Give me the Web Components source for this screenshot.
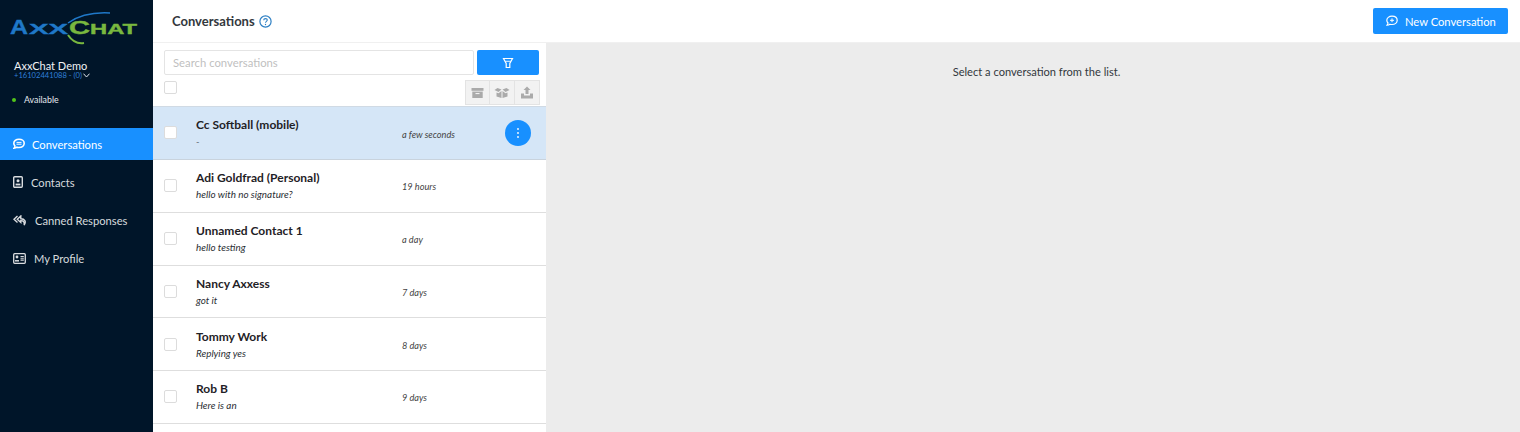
<!DOCTYPE html>
<html>
<head>
<meta charset="utf-8">
<title>AxxChat</title>
<style>
  html, body { margin: 0; height: 100%; overflow: hidden; }
  body { font-family: Lato, "Noto Sans", sans-serif; }
</style>
</head>
<body>
<axx-app>
  <axx-sidebar slot="sidebar"></axx-sidebar>
  <axx-topbar slot="topbar"></axx-topbar>
  <axx-list slot="list">
    <axx-row name="Cc Softball (mobile)" preview="-" time="a few seconds" active></axx-row>
    <axx-row name="Adi Goldfrad (Personal)" preview="hello with no signature?" time="19 hours"></axx-row>
    <axx-row name="Unnamed Contact 1" preview="hello testing" time="a day"></axx-row>
    <axx-row name="Nancy Axxess" preview="got it" time="7 days"></axx-row>
    <axx-row name="Tommy Work" preview="Replying yes" time="8 days"></axx-row>
    <axx-row name="Rob B" preview="Here is an" time="9 days"></axx-row>
  </axx-list>
  <axx-empty slot="detail">Select a conversation from the list.</axx-empty>
</axx-app>

<script>
class AxxApp extends HTMLElement {
  constructor() {
    super()
    this.attachShadow({mode: 'open'})
    this.shadowRoot.innerHTML = /*html*/ `
      <style>
        :host {
          display: grid;
          grid-template-columns: 153px 393px 1fr;
          grid-template-rows: 43px 1fr;
          height: 432px;
          overflow: hidden;
          background: #fff;
        }
        .side { grid-row: 1 / 3; }
        .top { grid-column: 2 / 4; }
      </style>
      <div class="side"><slot name="sidebar"></slot></div>
      <div class="top"><slot name="topbar"></slot></div>
      <slot name="list"></slot>
      <slot name="detail"></slot>
    `
  }
}

class AxxSidebar extends HTMLElement {
  constructor() {
    super()
    this.attachShadow({mode: 'open'})
    this.shadowRoot.innerHTML = /*html*/ `
      <style>
        :host { display: block; height: 432px; background: #001529; color: #fff; overflow: hidden; }
        .logo { display: block; margin: 10px 0 0 8px; }
        .logo text { font-family: "Liberation Sans", sans-serif; font-weight: 700; }
        .blue { fill: #1f78c8; stroke: #1f78c8; stroke-width: .4; }
        .green { fill: #79b83f; stroke: #79b83f; stroke-width: .4; }
        .user { padding: 11px 0 0 14px; height: 20px; }
        .name { font-size: 11px; line-height: 13px; color: #f0f3f6; }
        .phone { display: flex; align-items: center; font-size: 7.6px; line-height: 7px; color: #2f7fd8; }
        .phone svg { margin-left: 1px; }
        .status { display: flex; align-items: center; gap: 8px; margin: 14px 0 0 12px; font-size: 8.8px; line-height: 13px; color: #e6ebf0; }
        .dot { width: 4px; height: 4px; border-radius: 50%; background: #52c41a; }
        nav { display: flex; flex-direction: column; gap: 6px; margin-top: 22px; }
        a { display: flex; align-items: center; height: 32px; padding-left: 13px; font-size: 11.2px; color: rgba(255,255,255,.85); }
        a.on { background: #1890ff; color: #fff; }
        a svg { flex: none; fill: none; stroke: currentColor; }
      </style>
      <svg class="logo" width="132" height="38" viewBox="0 0 132 38">
        <path d="M60 13C70 6 84 2 102 3" fill="none" stroke="#1f78c8" stroke-width="1.500"/>
        <path d="M60 25C64 31 70 34 76 33" fill="none" stroke="#79b83f" stroke-width="2"/>
        <text class="blue" x="2" y="24" font-size="21" textLength="18" lengthAdjust="spacingAndGlyphs">A</text>
        <text class="blue" x="21" y="24" font-size="14" textLength="39" lengthAdjust="spacingAndGlyphs">XX</text>
        <text class="green" x="61" y="24" font-size="19" textLength="21" lengthAdjust="spacingAndGlyphs">C</text>
        <text class="green" x="82" y="24" font-size="15" textLength="47" lengthAdjust="spacingAndGlyphs">HAT</text>
      </svg>
      <div class="user">
        <div class="name">AxxChat Demo</div>
        <div class="phone">+16102441088 - (0)<svg width="7" height="5" viewBox="0 0 7 5"><path d="M.5.7 3.500 4 6.500.7" fill="none" stroke="#dfe6ee" stroke-width="1"/></svg></div>
      </div>
      <div class="status"><span class="dot"></span>Available</div>
      <nav>
        <a class="on" style="gap:7px">
          <svg width="12" height="12" viewBox="0 0 12 12" stroke-width="1.600"><path d="M6 1.200C3 1.200.8 3 .8 5.300c0 1.100.5 2 1.200 2.700-.1.900-.6 1.700-1 2.200 1.200 0 2.300-.5 3-1 .6.200 1.300.3 2 .3 3 0 5.200-1.800 5.200-4.200S9 1.200 6 1.200Z"/><path d="M3.500 4.400h5M3.500 6.200h5" stroke-width="1"/></svg>
          Conversations</a>
        <a style="gap:8px">
          <svg width="10" height="12" viewBox="0 0 10 12" stroke-width="1.400"><rect x=".7" y=".7" width="8.600" height="10.600" rx="1"/><circle cx="5" cy="4.700" r="1.500" fill="currentColor" stroke="none"/><path d="M2.600 8.500h4.800" stroke-width="1.800"/></svg>
          Contacts</a>
        <a style="gap:8px">
          <svg width="14" height="11" viewBox="0 0 14 11" stroke-width="1.400"><path d="M4.500 1 1 4.300l3.500 3.200"/><path d="M7.800 1 4.300 4.300l3.500 3.200V5.600c2.600 0 3.700 1.400 3.400 4.400 2.300-3.500.6-6.200-3.400-6.300Z"/></svg>
          Canned Responses</a>
        <a style="gap:8px">
          <svg width="13" height="11" viewBox="0 0 13 11" stroke-width="1.300"><rect x=".7" y=".7" width="11.600" height="9.600" rx="1"/><circle cx="4" cy="4" r="1.400" fill="currentColor" stroke="none"/><path d="M2 7.800h4" stroke-width="1.500"/><path d="M7.500 3.500h3.300M7.500 5.300h3.300M7.500 7.100h3.300" stroke-width="1.100"/></svg>
          My Profile</a>
      </nav>
    `
  }
}

class AxxTopbar extends HTMLElement {
  constructor() {
    super()
    this.attachShadow({mode: 'open'})
    this.shadowRoot.innerHTML = /*html*/ `
      <style>
        :host { display: flex; align-items: center; justify-content: space-between; height: 43px; box-sizing: border-box; padding: 0 12px 0 19px; background: #fff; border-bottom: 1px solid #f0f0f0; }
        .title { display: flex; align-items: center; gap: 4px; font-size: 13px; font-weight: 700; color: #33383d; }
        button { display: flex; align-items: center; gap: 7px; height: 26px; width: 135px; padding: 0 0 0 13px; border: 0; border-radius: 2px; background: #1890ff; color: #fff; font: 11.200px Lato, sans-serif; }
      </style>
      <div class="title">Conversations
        <svg width="13" height="13" viewBox="0 0 13 13"><circle cx="6.500" cy="6.500" r="5.600" fill="none" stroke="#2f80c4" stroke-width="1.200"/><path d="M4.700 5.200c0-1 .8-1.600 1.800-1.600s1.800.6 1.800 1.500c0 1.200-1.800 1.300-1.800 2.600" fill="none" stroke="#2f80c4" stroke-width="1.100"/><circle cx="6.500" cy="9.500" r=".7" fill="#2f80c4"/></svg>
      </div>
      <button>
        <svg width="12" height="12" viewBox="0 0 12 12" fill="none" stroke="#fff"><path d="M6 1.200C3 1.200.8 3 .8 5.300c0 1.100.5 2 1.200 2.700-.1.900-.6 1.700-1 2.200 1.200 0 2.300-.5 3-1 .6.200 1.300.3 2 .3 3 0 5.200-1.800 5.200-4.200S9 1.200 6 1.200Z" stroke-width="1.200"/><path d="M4 5.300h4M6 3.400v3.800"/></svg>
        New Conversation</button>
    `
  }
}

class AxxList extends HTMLElement {
  constructor() {
    super()
    this.attachShadow({mode: 'open'})
    this.shadowRoot.innerHTML = /*html*/ `
      <style>
        :host { display: block; background: #fff; overflow: hidden; height: 389px; }
        .search { display: flex; gap: 3px; padding: 7px 7px 0 11px; }
        input { flex: 1; min-width: 0; box-sizing: border-box; height: 25px; padding: 0 8px; border: 1px solid #e4e4e4; border-radius: 2px; font: 11.300px Lato, sans-serif; outline: 0; }
        input::placeholder { color: #bfbfbf; }
        .filter { width: 62px; height: 25px; padding: 0; border: 0; border-radius: 2px; background: #1890ff; display: flex; align-items: center; justify-content: center; }
        .tools { display: flex; justify-content: space-between; padding: 5px 6px 0 11px; height: 26px; }
        .check { width: 11px; height: 11px; margin-top: 1px; border: 1px solid #dcdcdc; border-radius: 2px; background: #fff; }
        .group { display: flex; height: 25px; }
        .group span { display: flex; align-items: center; justify-content: center; width: 25px; box-sizing: border-box; border: 1px solid #e3e3e3; border-left-width: 0; background: #f2f2f2; }
        .group span:first-child { border-left-width: 1px; }
      </style>
      <div class="search">
        <input placeholder="Search conversations">
        <button class="filter" aria-label="Filter">
          <svg width="12" height="12" viewBox="0 0 12 12" fill="none" stroke="#fff" stroke-width="1.200"><path d="M1.500 1.500h9L7.800 6.500v4H4.200v-4Z"/><path d="M3.300 4.300h5.400" stroke-width=".9"/></svg>
        </button>
      </div>
      <div class="tools">
        <div class="check"></div>
        <div class="group">
          <span><svg width="13" height="12" viewBox="0 0 13 12" fill="#aaa"><rect x=".5" y="1" width="12" height="2.800"/><rect x="1.300" y="4.600" width="10.400" height="6.400"/><rect x="4.500" y="6" width="4" height="1.100" fill="#f2f2f2"/></svg></span>
          <span><svg width="16" height="12" viewBox="0 0 16 12" fill="#aaa"><path d="M.5 3 3.500 1l4 1.500L4.500 5Z"/><path d="M15.500 3 12.500 1l-4 1.500L11.500 5Z"/><path d="M2.500 5.500 4.500 6.200 7.500 4v7l-5-1.500Z"/><path d="M13.500 5.500 11.500 6.200 8.500 4v7l5-1.500Z"/></svg></span>
          <span><svg width="14" height="13" viewBox="0 0 14 13" fill="#aaa"><path d="M7 .5 10.500 4H8.500v4h-3V4h-2Z"/><path d="M1 7.500h3V9.500h6V7.500h3V12.500H1Z"/></svg></span>
        </div>
      </div>
      <slot></slot>
    `
  }
}

class AxxRow extends HTMLElement {
  connectedCallback() {
    if (this.shadowRoot) return
    this.attachShadow({mode: 'open'})
    const more = this.hasAttribute('active')
      ? '<span class="more"><svg width="2" height="10" viewBox="0 0 2 10" fill="#fff"><circle cx="1" cy="1" r=".9"/><circle cx="1" cy="5" r=".9"/><circle cx="1" cy="9" r=".9"/></svg></span>'
      : ''
    this.shadowRoot.innerHTML = /*html*/ `
      <style>
        :host { display: flex; align-items: center; box-sizing: border-box; height: 52.750px; border-bottom: 1px solid #dedede; position: relative; background: #fff; }
        :host([active]) { background: #d5e6f7; border-top: 1px solid #d0dae4; height: 54px; border-bottom-color: #c9d3dd; }
        .check { flex: none; width: 11px; height: 11px; margin-left: 11px; border: 1px solid #dcdcdc; border-radius: 2px; background: #fff; }
        :host([active]) .check { margin-top: -2px; }
        .body { width: 206px; margin-left: 19px; }
        :host([active]) .body { margin-top: -2px; }
        .name { font-size: 12px; line-height: 16px; font-weight: 700; color: #1f2226; white-space: nowrap; }
        .preview { margin-top: 2px; font-size: 9.900px; line-height: 13px; font-style: italic; color: #2a2e33; white-space: nowrap; }
        .time { padding-top: 2px; font-size: 9.200px; font-style: italic; color: #444; white-space: nowrap; }
        .more { position: absolute; left: 352px; top: 13px; width: 26px; height: 26px; border-radius: 50%; background: #1890ff; display: flex; align-items: center; justify-content: center; }
      </style>
      <div class="check"></div>
      <div class="body">
        <div class="name">${this.getAttribute('name')}</div>
        <div class="preview">${this.getAttribute('preview')}</div>
      </div>
      <div class="time">${this.getAttribute('time')}</div>
      ${more}
    `
  }
}

class AxxEmpty extends HTMLElement {
  constructor() {
    super()
    this.attachShadow({mode: 'open'})
    this.shadowRoot.innerHTML = /*html*/ `
      <style>
        :host { display: block; background: #ececec; height: 389px; padding: 21px 0 0 7px; box-sizing: border-box; text-align: center; font-size: 11.100px; line-height: 15px; color: #33383d; }
      </style>
      <slot></slot>
    `
  }
}

customElements.define('axx-app', AxxApp)
customElements.define('axx-sidebar', AxxSidebar)
customElements.define('axx-topbar', AxxTopbar)
customElements.define('axx-list', AxxList)
customElements.define('axx-row', AxxRow)
customElements.define('axx-empty', AxxEmpty)
</script>
</body>
</html>
